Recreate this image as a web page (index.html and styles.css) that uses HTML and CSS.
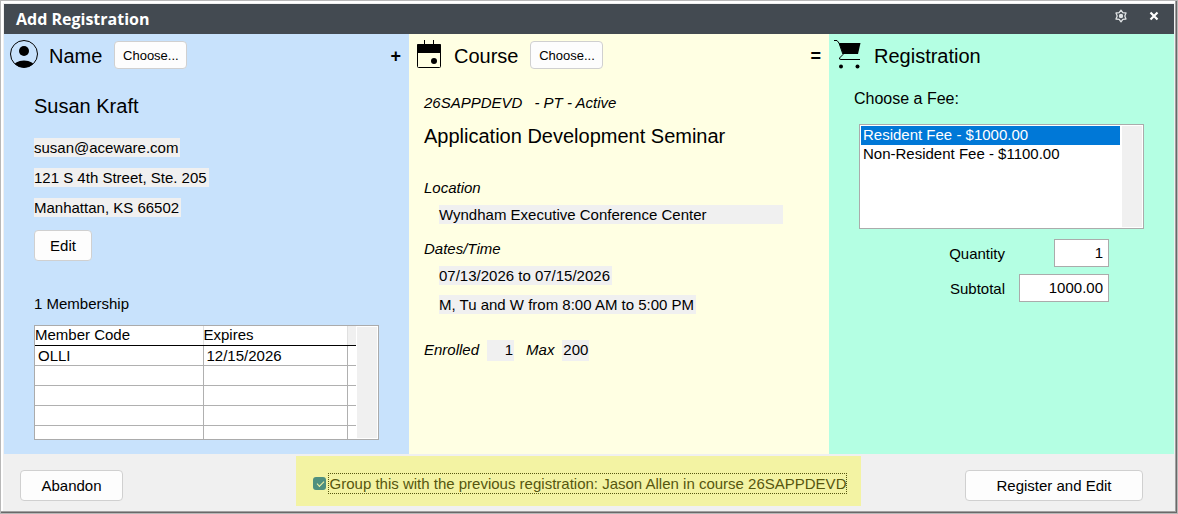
FILE: index.html
```html
<!DOCTYPE html>
<html lang="en">
<head>
    <meta charset="UTF-8">
    <meta name="viewport" content="width=device-width, initial-scale=1.0">
    <title>Add Registration</title>
    <link rel="stylesheet" href="styles.css">
</head>
<body>
    <div class="window">
        <header class="titlebar">
            <h1>Add Registration</h1>
            <button class="title-btn" type="button" aria-label="Settings">
                <svg width="14" height="14" viewBox="0 0 14 14">
                    <path d="M7 1.2 L8.8 3.6 L12 4 L10.8 7 L12 10 L8.8 10.4 L7 12.8 L5.2 10.4 L2 10 L3.2 7 L2 4 L5.2 3.6 Z" fill="none" stroke="#dfe2e4" stroke-width="1.3" stroke-linejoin="round"/>
                    <circle cx="7" cy="7" r="2.2" fill="#dfe2e4"/>
                </svg>
            </button>
            <button class="title-btn" type="button" aria-label="Close">
                <svg width="14" height="14" viewBox="0 0 14 14">
                    <path d="M3.5 3.5 L10.5 10.5 M10.5 3.5 L3.5 10.5" stroke="#fff" stroke-width="2.2"/>
                </svg>
            </button>
        </header>

        <main class="columns">
            <section class="col col-name">
                <div class="col-head">
                    <svg width="30" height="30" viewBox="0 0 30 30">
                        <defs>
                            <clipPath id="face"><circle cx="15" cy="14" r="13.5"/></clipPath>
                        </defs>
                        <circle cx="15" cy="14" r="13.5" fill="none" stroke="#000" stroke-width="1"/>
                        <circle cx="15" cy="11" r="5" fill="#000"/>
                        <ellipse cx="15" cy="27" rx="11" ry="6.5" fill="#000" clip-path="url(#face)"/>
                    </svg>
                    <h2>Name</h2>
                    <button class="btn btn-small" type="button">Choose...</button>
                    <span class="operator">+</span>
                </div>
                <div class="name-body">
                    <p class="big">Susan Kraft</p>
                    <p class="line"><span class="field">susan@aceware.com</span></p>
                    <p class="line"><span class="field">121 S 4th Street, Ste. 205</span></p>
                    <p class="line"><span class="field">Manhattan, KS 66502</span></p>
                    <button class="btn btn-edit" type="button">Edit</button>
                    <p class="membership">1 Membership</p>
                    <div class="grid-box">
                        <table class="grid">
                            <thead>
                                <tr><th class="code">Member Code</th><th class="expires">Expires</th><th class="filler"></th></tr>
                            </thead>
                            <tbody>
                                <tr><td>OLLI</td><td>12/15/2026</td><td></td></tr>
                                <tr><td></td><td></td><td></td></tr>
                                <tr><td></td><td></td><td></td></tr>
                                <tr><td></td><td></td><td></td></tr>
                                <tr><td></td><td></td><td></td></tr>
                            </tbody>
                        </table>
                        <div class="scroll-track"></div>
                    </div>
                </div>
            </section>

            <section class="col col-course">
                <div class="col-head">
                    <svg width="30" height="30" viewBox="0 0 30 30">
                        <rect x="3.5" y="4.5" width="23" height="23" rx="1" fill="none" stroke="#000" stroke-width="1"/>
                        <path d="M3 5 Q3 4 4 4 H26 Q27 4 27 5 V13 H3 Z" fill="#000"/>
                        <path d="M10.5 0 V5 M19.5 0 V5" stroke="#000" stroke-width="1"/>
                        <circle cx="20" cy="21" r="3" fill="#000"/>
                    </svg>
                    <h2>Course</h2>
                    <button class="btn btn-small" type="button">Choose...</button>
                    <span class="operator">=</span>
                </div>
                <div class="course-body">
                    <p class="code-line"><span>26SAPPDEVD</span><span>- PT - Active</span></p>
                    <p class="big course-title">Application Development Seminar</p>
                    <p class="caption">Location</p>
                    <p class="detail"><span class="field field-place">Wyndham Executive Conference Center</span></p>
                    <p class="caption">Dates/Time</p>
                    <p class="detail"><span class="field">07/13/2026 to 07/15/2026</span></p>
                    <p class="detail"><span class="field">M, Tu and W from 8:00 AM to 5:00 PM</span></p>
                    <p class="counts"><span class="caption">Enrolled</span><span class="field count">1</span><span class="caption">Max</span><span class="field count">200</span></p>
                </div>
            </section>

            <section class="col col-registration">
                <div class="col-head">
                    <svg width="30" height="30" viewBox="0 0 30 30">
                        <path d="M0 0.5 H3 L5 3 L9 14.5 L5.5 18 Q5 19.5 7 19.5 H26" fill="none" stroke="#000" stroke-width="1"/>
                        <path d="M5 3 H26.5 L24 14 H9 Z" fill="#000"/>
                        <circle cx="7" cy="26.5" r="2" fill="#000"/>
                        <circle cx="23.5" cy="26.5" r="2" fill="#000"/>
                    </svg>
                    <h2>Registration</h2>
                </div>
                <div class="fee-body">
                    <label class="fee-label" for="fee">Choose a Fee:</label>
                    <div class="fee-box">
                        <select id="fee" size="5">
                            <option selected>Resident Fee - $1000.00</option>
                            <option>Non-Resident Fee - $1100.00</option>
                        </select>
                        <div class="scroll-track"></div>
                    </div>
                    <div class="amount">
                        <label for="quantity">Quantity</label>
                        <span class="amount-cell"><input id="quantity" class="quantity" type="text" value="1"></span>
                    </div>
                    <div class="amount">
                        <label for="subtotal">Subtotal</label>
                        <span class="amount-cell"><input id="subtotal" class="subtotal" type="text" value="1000.00"></span>
                    </div>
                </div>
            </section>
        </main>

        <footer class="actions">
            <button class="btn btn-abandon" type="button">Abandon</button>
            <div class="group">
                <input id="group" type="checkbox" checked>
                <label for="group">Group this with the previous registration: Jason Allen in course 26SAPPDEVD</label>
            </div>
            <button class="btn btn-register" type="button">Register and Edit</button>
        </footer>
    </div>
</body>
</html>
```
FILE: styles.css
```css
* {
    box-sizing: border-box;
}
body {
    margin: 0;
    font-family: "Liberation Sans", Arial, sans-serif;
    font-size: 15px;
    line-height: 19px;
    color: #000;
    background-color: #f0f0f0;
}
h1, h2, p {
    margin: 0;
}
button, input, select {
    font: inherit;
    color: inherit;
}

/* Window frame */
.window {
    min-height: 100vh;
    display: flex;
    flex-direction: column;
    border: 1px solid #b8b8b8;
    padding: 3px;
    box-shadow: inset -1px -1px #696969, inset -2px -2px #a0a0a0, inset 2px 2px #fff;
}
.titlebar {
    display: flex;
    align-items: center;
    height: 30px;
    padding: 0 13px 0 12px;
    background-color: #434a51;
    color: #fff;
}
.titlebar h1 {
    flex: 1;
    font-family: "Open Sans", "Noto Sans", sans-serif;
    font-size: 16px;
    font-weight: bold;
}
.title-btn {
    display: flex;
    width: 14px;
    margin-left: 19px;
    padding: 0 0 6px;
    border: none;
    background: none;
}

/* Columns */
.columns {
    flex: 1;
    display: grid;
    grid-template-columns: 405fr 420fr 345fr;
}
.col-name {
    background-color: #c8e2fc;
}
.col-course {
    background-color: #ffffe3;
}
.col-registration {
    background-color: #b4ffe3;
}
.col-head {
    display: flex;
    align-items: center;
    height: 42px;
    padding: 0 8px 0 5px;
}
.col-head h2 {
    margin: 0 12px 0 10px;
    padding-top: 2px;
    font-size: 20px;
    font-weight: normal;
}
.operator {
    margin-left: auto;
    padding-top: 2px;
    font-size: 18px;
    font-weight: bold;
}
.big {
    font-size: 20px;
    line-height: 24px;
}
.field {
    display: inline-block;
    padding-right: 2px;
    background-color: #f0f0f0;
}

/* Buttons */
.btn {
    border: 1px solid #d0d0d0;
    border-radius: 4px;
    padding: 0;
    background-color: #fdfdfd;
}
.btn-small {
    width: 73px;
    height: 28px;
    font-size: 13px;
}
.btn-edit {
    width: 58px;
    height: 31px;
    margin-top: 2px;
}
.btn-abandon {
    width: 103px;
    height: 31px;
}
.btn-register {
    width: 178px;
    height: 31px;
}

/* Name column */
.name-body {
    padding: 18px 30px 14px;
}
.name-body .big {
    margin-bottom: 20px;
}
.line {
    height: 30px;
}
.membership {
    margin: 33px 0 12px;
}
.grid-box {
    display: flex;
    height: 115px;
    overflow: hidden;
    border: 1px solid #ababab;
    background-color: #fff;
}
.grid {
    flex: 1;
    border-collapse: collapse;
    table-layout: fixed;
}
.grid th {
    height: 19px;
    padding: 0;
    border-right: 1px solid #e0e0e0;
    border-bottom: 1px solid #000;
    line-height: 18px;
    font-weight: normal;
    text-align: left;
}
.grid td {
    height: 20px;
    padding: 0 0 0 3px;
    border-right: 1px solid #b0b0b0;
    border-bottom: 1px solid #b0b0b0;
}
.grid th:last-child, .grid td:last-child {
    border-right: none;
}
.code {
    width: 168px;
}
.expires {
    width: 144px;
}
.grid .filler {
    background-color: #f0f0f0;
}
.scroll-track {
    flex: none;
    width: 20px;
    margin: 1px;
    background-color: #f0f0f0;
}

/* Course column */
.course-body {
    padding: 17px 15px 0;
}
.code-line {
    display: flex;
    gap: 12px;
    font-style: italic;
}
.course-title {
    margin: 12px 0 30px;
}
.caption {
    font-style: italic;
}
.detail {
    margin: 8px 0 15px 15px;
}
.detail + .detail {
    margin-top: -5px;
}
.field-place {
    width: 344px;
}
.counts {
    display: flex;
    margin-top: 26px;
}
.count {
    width: 27px;
    height: 21px;
    margin: 0 12px 0 8px;
    padding-right: 1px;
    text-align: right;
}

/* Registration column */
.fee-body {
    padding: 13px 30px 0 25px;
}
.fee-label {
    display: block;
    margin-bottom: 16px;
    font-size: 16px;
}
.fee-box {
    display: flex;
    height: 105px;
    margin-left: 5px;
    margin-bottom: 10px;
    border: 1px solid #ababab;
    background-color: #fff;
}
.fee-box select {
    flex: 1;
    padding: 1px;
    border: none;
    outline: none;
    overflow: hidden;
    background-color: #fff;
}
.fee-box option {
    min-height: 19px;
    padding: 0 2px;
    line-height: 19px;
}
.fee-box option:checked {
    background: #0078d7 linear-gradient(#0078d7, #0078d7);
    color: #fff;
}
.amount {
    display: flex;
    align-items: center;
    justify-content: flex-end;
    margin: 0 35px 7px 0;
}
.amount-cell {
    display: flex;
    justify-content: flex-end;
    width: 104px;
}
.amount input {
    height: 28px;
    padding: 0 5px 2px;
    border: 1px solid #ababab;
    background-color: #fff;
    text-align: right;
}
.quantity {
    width: 55px;
}
.subtotal {
    width: 90px;
}

/* Bottom bar */
.actions {
    display: flex;
    align-items: flex-start;
    justify-content: space-between;
    height: 56px;
    padding: 2px 31px 0 16px;
}
.actions .btn {
    margin-top: 14px;
}
.group {
    display: flex;
    align-items: center;
    height: 50px;
    margin-left: 69px;
    padding: 4px 14px 0 17px;
    background-color: #f3f3a3;
    color: #56560f;
}
.group input {
    position: relative;
    appearance: none;
    width: 13px;
    height: 13px;
    margin: 0 2px 0 0;
    border-radius: 3px;
    background-color: #4f907f;
}
.group input:checked::after {
    content: "";
    position: absolute;
    left: 4px;
    top: 4px;
    width: 6px;
    height: 3px;
    border: solid #f3f3a3;
    border-width: 0 0 1px 1px;
    transform: rotate(-45deg);
}
.group label {
    border: 1px dotted #56560f;
    padding-left: 1px;
    white-space: nowrap;
}
```
